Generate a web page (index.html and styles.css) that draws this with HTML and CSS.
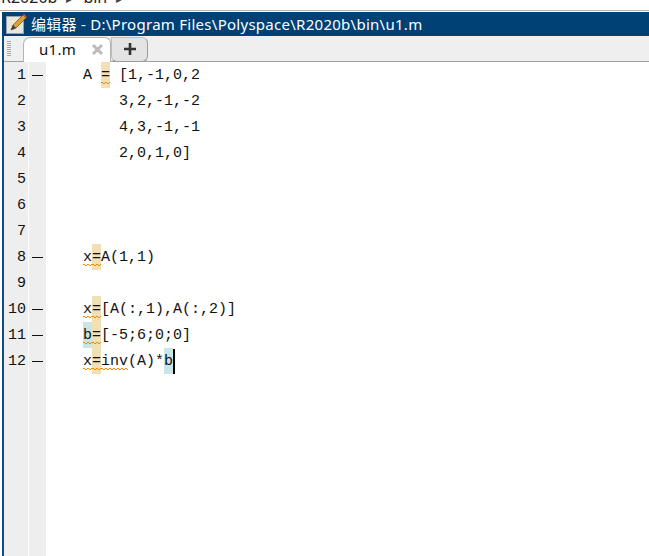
FILE: index.html
```html
<!DOCTYPE html>
<html lang="zh">
<head>
<meta charset="utf-8">
<title>编辑器</title>
<link rel="stylesheet" href="styles.css">
</head>
<body>
<div class="crumbs"><div class="crumb-text"><span>R2020b</span><span class="sep">▸</span><span>bin</span><span class="sep">▸</span></div></div>
<div class="window">
  <div class="titlebar">
    <svg class="app-icon" width="22" height="22" viewBox="0 0 22 22">
      <rect x="1.500" y="3.500" width="17" height="17" fill="#e9e6df" stroke="#9aa3ad"/>
      <path d="M6 17 L8 12 L18 2 L21 5 L11 15 Z" fill="#e0a030" stroke="#6b4a20" stroke-width="0.7"/>
      <path d="M18 2 L21 5 L22 4 L19 1 Z" fill="#d9534f"/>
      <path d="M6 17 L8 12 L11 15 Z" fill="#3a3a3a"/>
    </svg>
    <span class="title-text">编辑器 - D:\Program Files\Polyspace\R2020b\bin\u1.m</span>
  </div>
  <div class="tabbar">
    <div class="grip"></div>
    <div class="tab">
      <span class="tab-name">u1.m</span>
      <svg class="tab-close" width="13" height="13" viewBox="0 0 13 13"><path d="M2 2 L11 11 M11 2 L2 11" stroke="#bbb" stroke-width="3"/></svg>
    </div>
    <div class="tab-add">
      <svg width="14" height="14" viewBox="0 0 14 14"><path d="M7 1 V13 M1 7 H13" stroke="#333" stroke-width="2.600"/></svg>
    </div>
  </div>
  <div class="editor">
    <div class="gutter">
      <div class="ln">1</div><div class="ln">2</div><div class="ln">3</div><div class="ln">4</div><div class="ln">5</div><div class="ln">6</div><div class="ln">7</div><div class="ln">8</div><div class="ln">9</div><div class="ln">10</div><div class="ln">11</div><div class="ln">12</div>
    </div>
    <div class="marks">
      <div class="mk on"></div><div class="mk"></div><div class="mk"></div><div class="mk"></div><div class="mk"></div><div class="mk"></div><div class="mk"></div><div class="mk on"></div><div class="mk"></div><div class="mk on"></div><div class="mk on"></div><div class="mk on"></div>
    </div>
    <div class="code">
      <div class="line">A <span class="tok hl warn">=</span> [1,-1,0,2</div>
      <div class="line">    3,2,-1,-2</div>
      <div class="line">    4,3,-1,-1</div>
      <div class="line">    2,0,1,0]</div>
      <div class="line"></div>
      <div class="line"></div>
      <div class="line"></div>
      <div class="line"><span class="tok warn">x</span><span class="tok hl warn">=</span>A(1,1)</div>
      <div class="line"></div>
      <div class="line"><span class="tok warn">x</span><span class="tok hl warn">=</span>[A(:,1),A(:,2)]</div>
      <div class="line"><span class="tok hb warn">b</span><span class="tok hl warn">=</span>[-5;6;0;0]</div>
      <div class="line"><span class="tok warn">x</span><span class="tok hl warn">=</span><span class="tok warn">inv</span>(A)*<span class="tok hb">b</span><span class="caret"></span></div>
    </div>
  </div>
</div>
</body>
</html>
```
FILE: styles.css
```css
html, body {
  margin: 0;
  padding: 0;
  height: 100%;
  background: #fff;
  overflow: hidden;
}
body {
  display: flex;
  flex-direction: column;
  height: 556px;
}
.crumbs {
  height: 10px;
  overflow: hidden;
  border-bottom: 1px solid #b4b4b4;
  flex: none;
}
.crumb-text {
  display: flex;
  align-items: baseline;
  margin-top: -13px;
  padding-left: 1px;
  font: 16px/20px "Noto Sans", "Noto Sans CJK SC", sans-serif;
  color: #222;
}
.sep {
  font-size: 11px;
  margin: 0 9px;
  color: #444;
  width: 8px;
}
.window {
  flex: 1;
  display: flex;
  flex-direction: column;
  margin-left: 2px;
  border-left: 2px solid #0f4a80;
  margin-top: 1px;
  min-height: 0;
}
.titlebar {
  height: 24px;
  margin-left: -2px;
  background: #004175;
  display: flex;
  align-items: center;
  gap: 4px;
  padding-left: 3px;
  flex: none;
}
.app-icon { flex: none; }
.title-text {
  color: #fff;
  font: 15px/24px "Noto Sans", "Noto Sans CJK SC", sans-serif;
  letter-spacing: 0.27px;
  white-space: pre;
}
.tabbar {
  height: 26px;
  background: #efefef;
  border-bottom: 1px solid #a0a0a0;
  box-sizing: border-box;
  display: flex;
  align-items: flex-end;
  flex: none;
}
.grip {
  width: 4px;
  height: 15px;
  margin: 0 12px 5px 3px;
  background: repeating-linear-gradient(to bottom, #a8a8a8 0 1px, transparent 1px 2px);
}
.tab {
  width: 88px;
  height: 25px;
  box-sizing: border-box;
  background: #fff;
  border: 1px solid #b4b4b4;
  border-bottom: none;
  border-radius: 7px 6px 0 0;
  display: flex;
  align-items: center;
  margin-bottom: -1px;
  padding: 0 0 2px 15px;
  flex: none;
}
.tab-name {
  font: 15px/22px "Noto Sans", sans-serif;
  letter-spacing: 0.3px;
  color: #111;
  width: 52px;
}
.tab-close { display: block; }
.tab-add {
  width: 37px;
  height: 25px;
  box-sizing: border-box;
  border: 1px solid #9c9c9c;
  border-top-color: #bdbdbd;
  border-left-color: #bdbdbd;
  border-radius: 0 6px 6px 6px;
  background: #e4e4e4;
  display: flex;
  align-items: center;
  justify-content: center;
  flex: none;
  padding-bottom: 1px;
  margin-bottom: -1px;
}
.editor {
  flex: 1;
  display: flex;
  min-height: 0;
  background: #fff;
  font: 15px/28px "Liberation Mono", monospace;
  color: #111;
}
.gutter {
  width: 24px;
  box-sizing: border-box;
  padding-right: 2px;
  background: #eee;
  flex: none;
  margin-right: 1px;
}
.ln {
  height: 26px;
  text-align: right;
}
.marks {
  width: 17px;
  background: #eee;
  flex: none;
  margin-right: 37px;
}
.mk { height: 26px; position: relative; }
.mk.on::after {
  content: "";
  position: absolute;
  left: 3px;
  top: 13px;
  width: 11px;
  height: 1px;
  background: #111;
}
.code { flex: 1; }
.line {
  height: 26px;
  white-space: pre;
}
.tok {
  display: inline-block;
  height: 26px;
}
.hl { background-color: #f1e0b6; }
.hb { background-color: #c9e6e6; }
.warn {
  background-image:
    linear-gradient(45deg, transparent 38%, #f08a00 38% 62%, transparent 62%),
    linear-gradient(-45deg, transparent 38%, #f08a00 38% 62%, transparent 62%);
  background-size: 4px 2px;
  background-repeat: repeat-x;
  background-position: 0 20px, 2px 20px;
}
.caret {
  display: inline-block;
  width: 2px;
  height: 25px;
  background: #000;
  vertical-align: top;
  margin-top: 1px;
}
```
